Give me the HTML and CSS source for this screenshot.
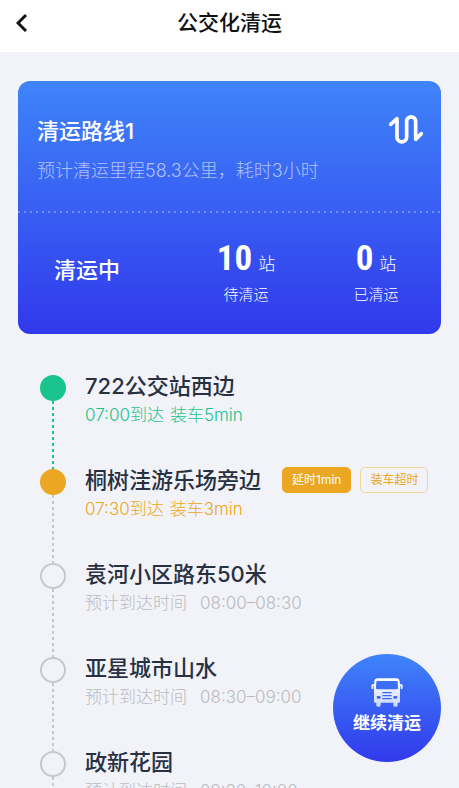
FILE: index.html
```html
<!DOCTYPE html>
<html lang="zh-CN">
<head>
<meta charset="utf-8">
<meta name="viewport" content="width=device-width, initial-scale=1">
<title>公交化清运</title>
<link rel="stylesheet" href="styles.css">
</head>
<body>
<header class="topbar">
  <button class="back" type="button" aria-label="返回">
    <svg class="back-icon" viewBox="0 0 12 20" aria-hidden="true"><path d="M10 2 2 10l8 8"/></svg>
  </button>
  <h1 class="topbar-title">公交化清运</h1>
</header>
<main class="content">
  <section class="card">
    <div class="card-head">
      <div>
        <h2 class="card-title">清运路线1</h2>
        <p class="card-desc">预计清运里程58.3公里，耗时3小时</p>
      </div>
      <svg class="route-icon" viewBox="0 0 108 96" aria-hidden="true"><path d="M8 34 27 17V72a14.5 14.5 0 0 0 29 0V25a13.5 13.5 0 0 1 27 0V79L100 62"/></svg>
    </div>
    <div class="card-stats">
      <p class="status">清运中</p>
      <div class="stat">
        <p class="stat-value"><strong>10</strong><span>站</span></p>
        <p class="stat-label">待清运</p>
      </div>
      <div class="stat">
        <p class="stat-value"><strong>0</strong><span>站</span></p>
        <p class="stat-label">已清运</p>
      </div>
    </div>
  </section>
  <ol class="stops">
    <li class="stop stop-done">
      <div class="marker"></div>
      <div class="stop-body">
        <div class="stop-head"><h3 class="stop-name">722公交站西边</h3></div>
        <p class="stop-time"><span>07:00到达</span><span>装车5min</span></p>
      </div>
    </li>
    <li class="stop stop-late">
      <div class="marker"></div>
      <div class="stop-body">
        <div class="stop-head">
          <h3 class="stop-name">桐树洼游乐场旁边</h3>
          <span class="tag tag-solid">延时1min</span>
          <span class="tag">装车超时</span>
        </div>
        <p class="stop-time"><span>07:30到达</span><span>装车3min</span></p>
      </div>
    </li>
    <li class="stop">
      <div class="marker"></div>
      <div class="stop-body">
        <div class="stop-head"><h3 class="stop-name">袁河小区路东50米</h3></div>
        <p class="stop-time stop-plan"><span>预计到达时间</span><span>08:00–08:30</span></p>
      </div>
    </li>
    <li class="stop">
      <div class="marker"></div>
      <div class="stop-body">
        <div class="stop-head"><h3 class="stop-name">亚星城市山水</h3></div>
        <p class="stop-time stop-plan"><span>预计到达时间</span><span>08:30–09:00</span></p>
      </div>
    </li>
    <li class="stop">
      <div class="marker"></div>
      <div class="stop-body">
        <div class="stop-head"><h3 class="stop-name">政新花园</h3></div>
        <p class="stop-time stop-plan"><span>预计到达时间</span><span>09:30–10:00</span></p>
      </div>
    </li>
  </ol>
</main>
<button class="fab" type="button">
  <svg class="bus-icon" viewBox="0 0 96 87" aria-hidden="true">
    <defs>
      <linearGradient id="bus" x1="0" y1="0" x2="0" y2="1">
        <stop offset="0" stop-color="#fff"/>
        <stop offset="1" stop-color="#c9d6ff"/>
      </linearGradient>
    </defs>
    <path fill="url(#bus)" fill-rule="evenodd" d="M20 1h56q9 0 10 9l1 9h5q3 0 3 3v8q0 3-3 3h-3v-9h-2v47q0 3-3 3h-4v8q0 4-4 4h-5q-4 0-4-4v-8H29v8q0 4-4 4h-5q-4 0-4-4v-8h-4q-3 0-3-3V24H7v9H4q-3 0-3-3v-8q0-3 3-3h5l1-9Q11 1 20 1ZM19 9q-3 0-3 3l-1 18q0 4 4 4h58q4 0 4-4l-1-18q0-3-3-3ZM34 42v4h28v-4ZM34 51v4h28v-4ZM34 60v4h28v-4ZM20 54q-3 0-3 4t3 4h6q3 0 3-4t-3-4ZM70 54q-3 0-3 4t3 4h6q3 0 3-4t-3-4Z"/>
  </svg>
  <span>继续清运</span>
</button>
</body>
</html>
```
FILE: styles.css
```css
*,
*::before,
*::after {
  box-sizing: border-box;
}

body {
  margin: 0;
  height: 100vh;
  display: flex;
  flex-direction: column;
  background: #f2f3f9;
  color: #273142;
  font-family: Inter, "Noto Sans CJK SC", sans-serif;
}

h1, h2, h3, p, ol {
  margin: 0;
  padding: 0;
}

button {
  border: 0;
  padding: 0;
  font: inherit;
  cursor: pointer;
}

.topbar {
  flex: none;
  display: grid;
  grid-template-columns: 44px 1fr 44px;
  align-items: center;
  height: 52px;
  padding-bottom: 6px;
  background: #fff;
  color: #111;
}

.back {
  display: flex;
  justify-content: center;
  background: none;
  color: inherit;
}

.back-icon {
  width: 12px;
  height: 20px;
  fill: none;
  stroke: currentColor;
  stroke-width: 3;
}

.topbar-title {
  font-size: 21px;
  font-weight: 500;
  line-height: 32px;
  text-align: center;
}

.content {
  flex: 1;
  min-height: 0;
  padding: 29px 18px 0;
  overflow-y: auto;
  scrollbar-width: none;
}

.card {
  border-radius: 12px;
  background: linear-gradient(#3f84f9, #3139ec);
  color: #fff;
}

.card-head {
  display: flex;
  justify-content: space-between;
  align-items: flex-start;
  padding: 32px 17px 26px 19px;
}

.card-title {
  font-size: 22px;
  font-weight: 500;
  line-height: 36px;
}

.card-desc {
  margin-top: 8px;
  font-size: 18px;
  font-weight: 300;
  line-height: 28px;
  color: rgba(255, 255, 255, 0.6);
}

.route-icon {
  flex: none;
  width: 36px;
  height: 32px;
  fill: none;
  stroke: currentColor;
  stroke-width: 11;
  stroke-linecap: round;
  stroke-linejoin: round;
}

.card-stats {
  display: grid;
  grid-template-columns: 138fr 180fr 80fr;
  align-items: center;
  height: 123px;
  padding-right: 25px;
  background: repeating-linear-gradient(90deg, rgba(255, 255, 255, 0.3) 0 2px, transparent 2px 6px) top / 100% 2px no-repeat;
}

.status {
  padding-bottom: 6px;
  font-size: 22px;
  font-weight: 500;
  line-height: 32px;
  text-align: center;
}

.stat {
  text-align: center;
}

.stat-value {
  display: flex;
  justify-content: center;
  align-items: baseline;
  gap: 6px;
  font-size: 17px;
  font-weight: 300;
  line-height: 40px;
}

.stat-value strong {
  font-family: "Roboto Condensed", "Liberation Sans Narrow", "Liberation Sans", sans-serif;
  font-size: 35px;
  font-weight: 700;
}

.stat-label {
  font-size: 15px;
  font-weight: 300;
  line-height: 22px;
}

.stops {
  padding: 37px 0 0 22px;
  list-style: none;
}

.stop {
  --tone: #c7c8cc;
  display: grid;
  grid-template-columns: 26px 1fr;
  column-gap: 19px;
  min-height: 94px;
}

.stop-done {
  --tone: #18c48c;
}

.stop-late {
  --tone: #eba721;
}

.marker {
  display: flex;
  flex-direction: column;
  align-items: center;
  margin: 4px 0 -4px;
}

.marker::before {
  content: "";
  flex: none;
  width: 26px;
  height: 26px;
  border: 2px solid var(--tone);
  border-radius: 50%;
}

.stop-done .marker::before,
.stop-late .marker::before {
  background: var(--tone);
}

.marker::after {
  content: "";
  flex: 1;
  width: 2px;
  background: repeating-linear-gradient(#c7c8cc 0 3px, transparent 3px 6px);
}

.stop-done .marker::after {
  background: repeating-linear-gradient(#18c48c 0 3px, transparent 3px 6px);
}

.stop-head {
  display: flex;
  align-items: center;
  gap: 9px;
  white-space: nowrap;
}

.stop-name {
  margin-right: 12px;
  font-size: 22px;
  font-weight: 500;
  line-height: 30px;
}

.tag {
  padding: 0 9px;
  border: 1px solid #f3d59a;
  border-radius: 5px;
  font-size: 12px;
  line-height: 24px;
  color: #eba721;
}

.tag-solid {
  border-color: #eba721;
  background: #eba721;
  color: #fff;
}

.stop-time {
  display: flex;
  gap: 6px;
  font-size: 17px;
  font-weight: 300;
  line-height: 28px;
  color: var(--tone);
}

.stop-plan {
  gap: 13px;
  color: #b9bbc0;
}

.fab {
  position: fixed;
  right: 18px;
  bottom: 26px;
  display: flex;
  flex-direction: column;
  align-items: center;
  gap: 3px;
  width: 108px;
  height: 108px;
  padding-top: 24px;
  border-radius: 50%;
  background: linear-gradient(#3f84f9, #3139ec);
  color: #fff;
  font-size: 17px;
  font-weight: 700;
  line-height: 26px;
}

.bus-icon {
  width: 32px;
  height: 29px;
}
```
